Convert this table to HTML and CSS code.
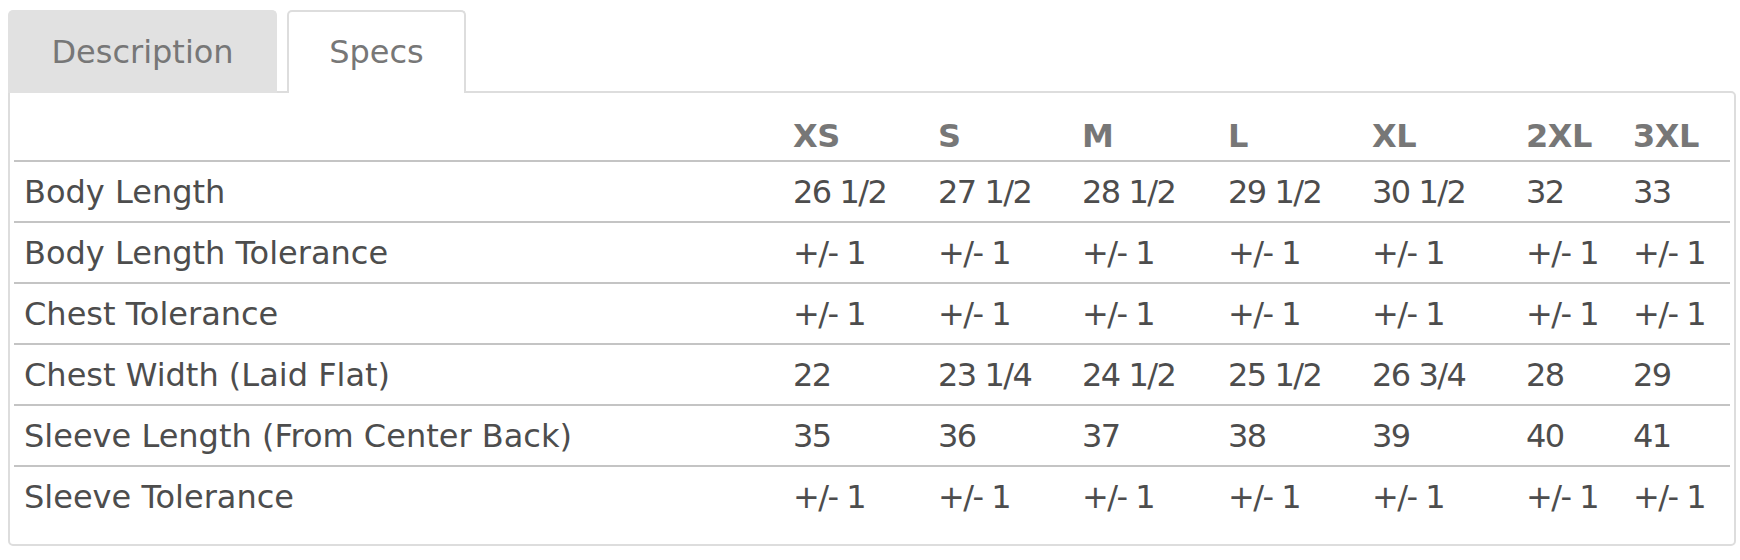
FILE: index.html
```html
<!DOCTYPE html>
<html lang="en">
<head>
<meta charset="utf-8">
<title>Specs</title>
<link rel="stylesheet" href="styles.css">
</head>
<body>
<div class="tabs">
  <div class="tab tab-inactive">Description</div>
  <div class="tab tab-active">Specs</div>
</div>
<div class="panel">
  <table class="specs">
    <colgroup>
      <col class="c-label">
      <col class="c-xs">
      <col class="c-s">
      <col class="c-m">
      <col class="c-l">
      <col class="c-xl">
      <col class="c-2xl">
      <col class="c-3xl">
    </colgroup>
    <thead>
      <tr><th></th><th>XS</th><th>S</th><th>M</th><th>L</th><th>XL</th><th>2XL</th><th>3XL</th></tr>
    </thead>
    <tbody>
      <tr><td>Body Length</td><td>26 1/2</td><td>27 1/2</td><td>28 1/2</td><td>29 1/2</td><td>30 1/2</td><td>32</td><td>33</td></tr>
      <tr><td>Body Length Tolerance</td><td>+/- 1</td><td>+/- 1</td><td>+/- 1</td><td>+/- 1</td><td>+/- 1</td><td>+/- 1</td><td>+/- 1</td></tr>
      <tr><td>Chest Tolerance</td><td>+/- 1</td><td>+/- 1</td><td>+/- 1</td><td>+/- 1</td><td>+/- 1</td><td>+/- 1</td><td>+/- 1</td></tr>
      <tr><td>Chest Width (Laid Flat)</td><td>22</td><td>23 1/4</td><td>24 1/2</td><td>25 1/2</td><td>26 3/4</td><td>28</td><td>29</td></tr>
      <tr><td>Sleeve Length (From Center Back)</td><td>35</td><td>36</td><td>37</td><td>38</td><td>39</td><td>40</td><td>41</td></tr>
      <tr><td>Sleeve Tolerance</td><td>+/- 1</td><td>+/- 1</td><td>+/- 1</td><td>+/- 1</td><td>+/- 1</td><td>+/- 1</td><td>+/- 1</td></tr>
    </tbody>
  </table>
</div>
</body>
</html>
```

FILE: styles.css
```css
html, body {
  margin: 0;
  background: #fff;
}
body {
  padding: 10px 4px 0 8px;
  font-family: "DejaVu Sans", "Liberation Sans", sans-serif;
  font-size: 32px;
  color: #4d4d4d;
}
.tabs {
  display: flex;
  gap: 10px;
  margin-bottom: -2px;
  position: relative;
  z-index: 1;
}
.tab {
  box-sizing: border-box;
  height: 83px;
  padding: 21px 0 0;
  line-height: 39px;
  text-align: center;
  color: #777;
  border: 2px solid transparent;
  border-bottom: none;
  border-radius: 5px 5px 0 0;
}
.tab-inactive {
  width: 269px;
  background: #e1e1e1;
  border-color: #e1e1e1;
}
.tab-active {
  width: 179px;
  background: #fff;
  border-color: #dddddd;
}
.panel {
  border: 2px solid #dddddd;
  border-radius: 0 5px 5px 5px;
  padding: 4px 4px 18px;
}
.specs {
  width: 100%;
  border-collapse: collapse;
  table-layout: fixed;
}
.c-label { width: 769px; }
.c-xs { width: 145px; }
.c-s { width: 144px; }
.c-m { width: 146px; }
.c-l { width: 144px; }
.c-xl { width: 154px; }
.c-2xl { width: 107px; }
.c-3xl { width: 107px; }
.specs th,
.specs td {
  text-align: left;
  line-height: 39px;
  white-space: nowrap;
  padding: 11px 10px 9px;
}
.specs td + td {
  letter-spacing: -1.5px;
}
.specs th {
  padding: 20px 10px 4px;
  font-weight: 700;
  color: #777;
  letter-spacing: -0.5px;
}
.specs thead tr,
.specs tbody tr {
  border-bottom: 2px solid #c4c4c4;
}
.specs tbody tr:last-child {
  border-bottom: none;
}
```
